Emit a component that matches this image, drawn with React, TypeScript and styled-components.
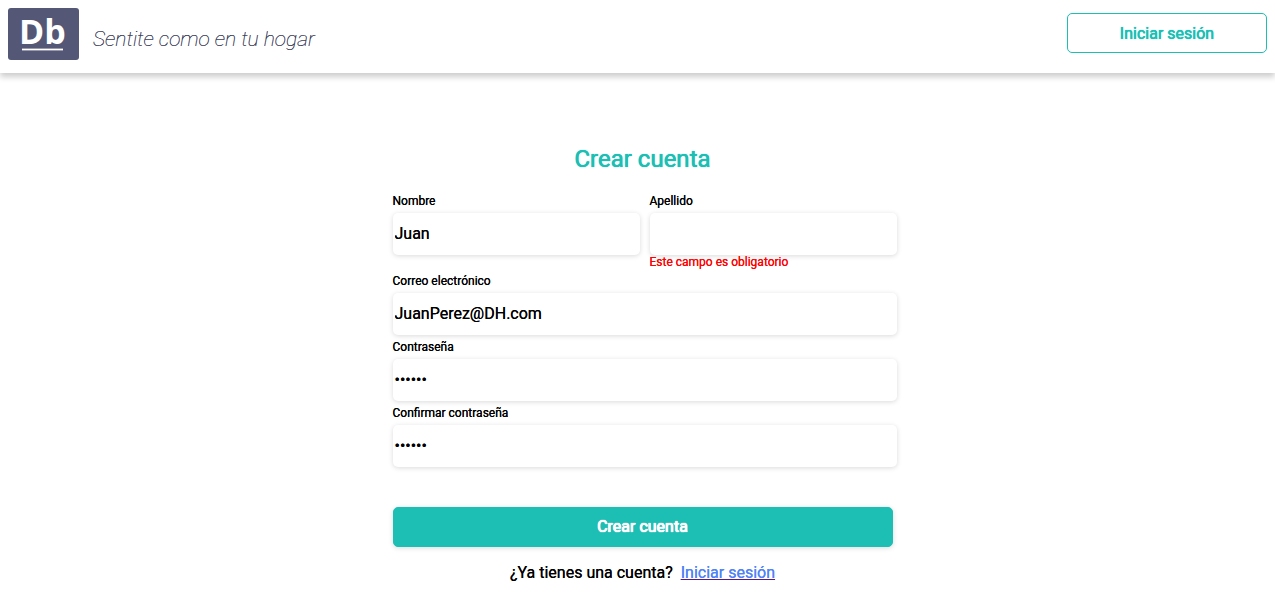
import React, { useState } from "react";
import styled, { createGlobalStyle } from "styled-components";

const teal = "#1dbeb4";
const navy = "#545776";

const GlobalStyle = createGlobalStyle`
  *, *::before, *::after { box-sizing: border-box; }
  body {
    margin: 0;
    background: #fff;
    color: #000;
    font-family: Roboto, "Liberation Sans", sans-serif;
    font-size: 16px;
    font-weight: 400;
    line-height: 20px;
    text-shadow: 0 0 currentColor;
  }
`;

const Header = styled.header`
  display: flex;
  align-items: flex-start;
  justify-content: space-between;
  padding: 8px 8px 13px;
  background: #fff;
  box-shadow: 0 4px 6px rgba(0, 0, 0, 0.2);
`;

const Brand = styled.a`
  display: flex;
  align-items: center;
  gap: 14px;
  color: ${navy};
  text-decoration: none;
`;

const Logo = styled.svg`
  display: block;
  width: 71px;
  height: 52px;
  text-shadow: none;
`;

const Slogan = styled.span`
  padding-top: 10px;
  color: #383b58;
  font-size: 21px;
  font-style: italic;
  font-weight: 100;
  line-height: 24px;
`;

const Button = styled.button<{ $filled?: boolean }>`
  height: 40px;
  padding: ${(p) => (p.$filled ? "0" : "1px 0 0")};
  border: 1px solid ${teal};
  border-radius: 5px;
  background: ${(p) => (p.$filled ? teal : "#fff")};
  color: ${(p) => (p.$filled ? "#fff" : teal)};
  font: inherit;
  text-shadow: 0 0 1px currentColor, 0 0 currentColor${(p) => (p.$filled ? ", 0 0 1px currentColor, 0 0 currentColor" : "")};
  cursor: pointer;
`;

const LoginButton = styled(Button)`
  width: 200px;
  margin-top: 5px;
`;

const SubmitButton = styled(Button)`
  width: calc(100% - 4px);
  margin-top: 35px;
  box-shadow: 0 1px 5px rgba(0, 0, 0, 0.15);
`;

const Main = styled.main`
  display: flex;
  justify-content: center;
  padding: 71px 0 0 14px;
`;

const Form = styled.form`
  width: 504px;
  max-width: 100%;
`;

const Title = styled.h1`
  margin: 0 4px 20px 0;
  color: ${teal};
  font-size: 24px;
  font-weight: 400;
  line-height: 30px;
  text-align: center;
  text-shadow: 0 0 1px currentColor, 0 0 currentColor;
`;

const NameRow = styled.div`
  display: grid;
  grid-template-columns: 1fr 1fr;
  gap: 10px;
`;

const FieldBox = styled.div`
  display: flex;
  flex-direction: column;
  margin-bottom: 5px;
`;

const Label = styled.label`
  margin-bottom: 5px;
  font-size: 12px;
  line-height: 14px;
`;

const Input = styled.input`
  width: 100%;
  height: 42px;
  padding: 0 2px 2px;
  border: 0;
  border-radius: 5px;
  outline: 0;
  background: #fff;
  box-shadow: 0 1px 5px rgba(0, 0, 0, 0.15);
  color: #000;
  font: inherit;
  text-shadow: inherit;
`;

const FieldError = styled.span`
  color: #f00;
  font-size: 12px;
  line-height: 14px;
`;

const Footer = styled.p`
  margin: 16px 4px 10px 0;
  text-align: center;
`;

const Link = styled.a`
  margin-left: 8px;
  color: #4f83f7;
  text-decoration: underline #551a8b;
`;

interface FieldProps {
  id: string;
  label: string;
  initial?: string;
  type?: string;
  error?: string;
}

function Field({ id, label, initial = "", type = "text", error }: FieldProps) {
  const [value, setValue] = useState(initial);
  return (
    <FieldBox>
      <Label htmlFor={id}>{label}</Label>
      <Input
        id={id}
        type={type}
        value={value}
        aria-invalid={Boolean(error)}
        aria-describedby={error ? `${id}-error` : undefined}
        onChange={(e) => setValue(e.target.value)}
      />
      {error && <FieldError id={`${id}-error`}>{error}</FieldError>}
    </FieldBox>
  );
}

export default function App() {
  return (
    <>
      <GlobalStyle />
      <Header>
        <Brand href="#">
          <Logo viewBox="0 0 71 52" role="img" aria-label="Db">
            <rect width="71" height="52" rx="3" fill={navy} />
            <text x="11" y="36" fill="#fff" fontFamily="'Open Sans', sans-serif" fontSize="34" fontWeight="700">
              Db
            </text>
            <rect x="14" y="40.6" width="41" height="1.8" fill="#fff" />
          </Logo>
          <Slogan>Sentite como en tu hogar</Slogan>
        </Brand>
        <LoginButton type="button">Iniciar sesión</LoginButton>
      </Header>
      <Main>
        <Form noValidate onSubmit={(e) => e.preventDefault()}>
          <Title>Crear cuenta</Title>
          <NameRow>
            <Field id="nombre" label="Nombre" initial="Juan" />
            <Field id="apellido" label="Apellido" error="Este campo es obligatorio" />
          </NameRow>
          <Field id="correo" label="Correo electrónico" type="email" initial="JuanPerez@DH.com" />
          <Field id="clave" label="Contraseña" type="password" initial="123456" />
          <Field id="confirmar" label="Confirmar contraseña" type="password" initial="123456" />
          <SubmitButton type="submit" $filled>
            Crear cuenta
          </SubmitButton>
          <Footer>
            ¿Ya tienes una cuenta?
            <Link href="#">Iniciar sesión</Link>
          </Footer>
        </Form>
      </Main>
    </>
  );
}
